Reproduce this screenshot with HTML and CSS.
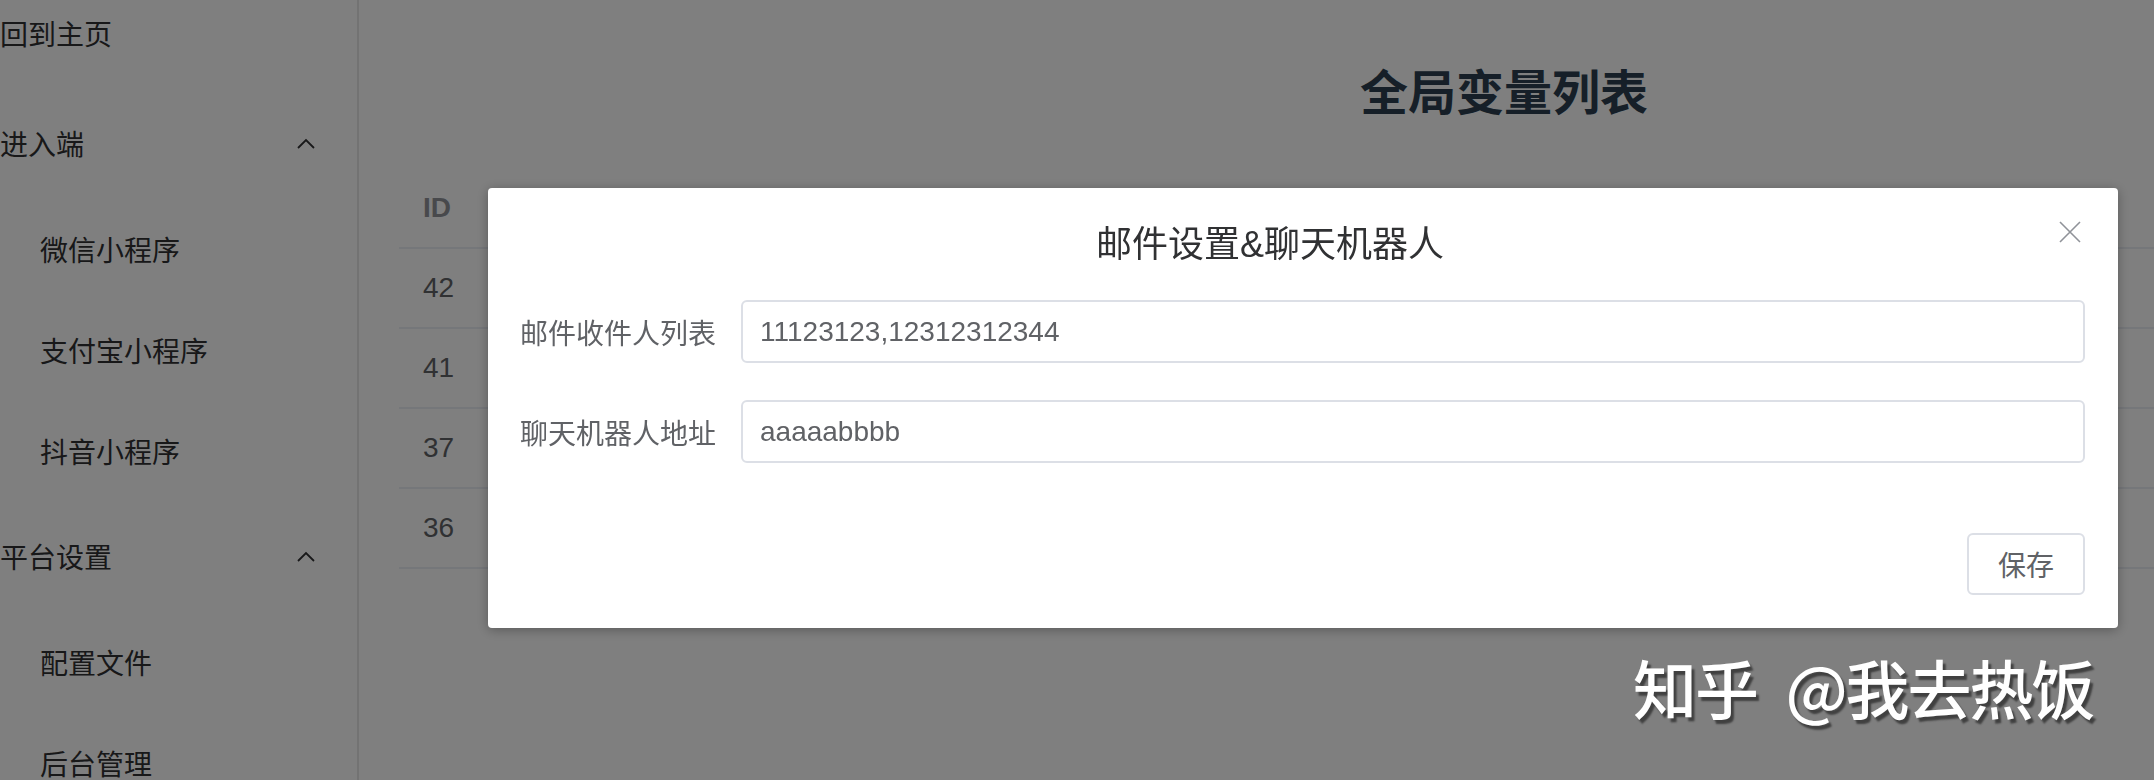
FILE: index.html
```html
<!DOCTYPE html>
<html lang="zh-CN">
  <head>
    <meta charset="UTF-8" />
    <meta name="viewport" content="width=device-width, initial-scale=1.0" />
    <title>全局变量列表</title>
    <link rel="stylesheet" href="styles.css">
  </head>
  <body>
    <div class="layout">
      <!-- 左侧菜单 -->
      <aside class="aside">
        <ul class="menu">
          <li class="menu-item">回到主页</li>
          <li class="menu-item submenu-title">
            <span>进入端</span>
            <svg class="arrow" width="18" height="11" viewBox="0 0 18 11"><polyline points="1,10 9,2 17,10" fill="none" stroke="#303133" stroke-width="1.8"/></svg>
          </li>
          <li class="menu-item sub">微信小程序</li>
          <li class="menu-item sub">支付宝小程序</li>
          <li class="menu-item sub">抖音小程序</li>
          <li class="menu-item submenu-title">
            <span>平台设置</span>
            <svg class="arrow" width="18" height="11" viewBox="0 0 18 11"><polyline points="1,10 9,2 17,10" fill="none" stroke="#303133" stroke-width="1.8"/></svg>
          </li>
          <li class="menu-item sub">配置文件</li>
          <li class="menu-item sub">后台管理</li>
        </ul>
      </aside>
      <!-- 主体 -->
      <main class="main">
        <h1 class="page-title">全局变量列表</h1>
        <table class="table">
          <thead>
            <tr><th>ID</th></tr>
          </thead>
          <tbody>
            <tr><td>42</td></tr>
            <tr><td>41</td></tr>
            <tr><td>37</td></tr>
            <tr><td>36</td></tr>
          </tbody>
        </table>
      </main>
    </div>

    <!-- 遮罩和弹窗 -->
    <div class="mask">
      <div class="dialog">
        <div class="dialog-header">邮件设置&amp;聊天机器人</div>
        <button class="dialog-close" aria-label="关闭">
          <svg width="22" height="22" viewBox="0 0 22 22"><path d="M1 1L21 21M21 1L1 21" stroke="#909399" stroke-width="1.6" fill="none"/></svg>
        </button>
        <form class="form">
          <div class="form-item">
            <label class="form-label">邮件收件人列表</label>
            <input class="input" type="text" value="11123123,12312312344">
          </div>
          <div class="form-item">
            <label class="form-label">聊天机器人地址</label>
            <input class="input" type="text" value="aaaaabbbb">
          </div>
        </form>
        <div class="dialog-footer">
          <button class="btn">保存</button>
        </div>
      </div>
    </div>

    <div class="watermark">知乎 @我去热饭</div>
  </body>
</html>
```

FILE: styles.css
```css
/* 样式初始化 */
* {
  margin: 0;
  padding: 0;
  box-sizing: border-box;
}
li {
  list-style: none;
}
body {
  width: 2154px;
  height: 780px;
  overflow: hidden;
  background: #fff;
  font-family: "Liberation Sans", "Noto Sans CJK SC", sans-serif;
  color: #303133;
}
.layout {
  display: flex;
  height: 100%;
}
/* 左侧菜单 */
.aside {
  width: 359px;
  flex-shrink: 0;
  border-right: 2px solid #e6e6e6;
  overflow: hidden;
}
.menu {
  margin-top: -22px;
}
.menu-item {
  height: 110px;
  display: flex;
  align-items: center;
  justify-content: space-between;
  font-size: 28px;
  color: #303133;
  padding-right: 42px;
}
.menu-item.sub {
  height: 101px;
  padding-left: 40px;
}
.arrow {
  display: block;
}
/* 主体 */
.main {
  flex: 1;
  overflow: hidden;
}
.page-title {
  font-size: 48px;
  line-height: 64px;
  font-weight: bold;
  color: #2c3e50;
  padding: 62px 0 0 1001px;
}
.table {
  margin: 42px 0 0 40px;
  width: calc(100% - 40px);
  border-collapse: collapse;
  font-size: 28px;
}
.table th,
.table td {
  height: 80px;
  text-align: left;
  padding-left: 24px;
  border-bottom: 2px solid #ebeef5;
}
.table th {
  color: #909399;
  font-weight: bold;
}
.table td {
  color: #606266;
}
/* 遮罩 */
.mask {
  position: fixed;
  top: 0;
  left: 0;
  right: 0;
  bottom: 0;
  background: rgba(0, 0, 0, 0.5);
}
/* 弹窗 */
.dialog {
  position: relative;
  width: 1630px;
  margin: 188px 0 0 488px;
  background: #fff;
  border-radius: 4px;
  box-shadow: 0 2px 12px rgba(0, 0, 0, 0.3);
  padding: 33px 33px 33px 32px;
}
.dialog-header {
  font-size: 36px;
  line-height: 48px;
  color: #303133;
  text-align: center;
  padding-right: 65px;
}
.dialog-close {
  position: absolute;
  top: 33px;
  right: 37px;
  border: none;
  background: none;
  width: 22px;
  height: 22px;
}
.dialog-close svg {
  display: block;
}
.form {
  margin-top: 31px;
  display: flex;
  flex-direction: column;
  gap: 37px;
}
.form-item {
  display: flex;
  align-items: center;
}
.form-label {
  width: 221px;
  padding-right: 25px;
  text-align: right;
  font-size: 28px;
  color: #606266;
}
.input {
  flex: 1;
  height: 63px;
  border: 2px solid #dcdfe6;
  border-radius: 6px;
  padding: 0 17px;
  font-family: "Liberation Sans", "Noto Sans CJK SC", sans-serif;
  font-size: 28px;
  color: #606266;
  outline: none;
}
.dialog-footer {
  margin-top: 70px;
  display: flex;
  justify-content: flex-end;
}
.btn {
  width: 118px;
  height: 62px;
  border: 2px solid #dcdfe6;
  border-radius: 6px;
  background: #fff;
  font-family: "Liberation Sans", "Noto Sans CJK SC", sans-serif;
  font-size: 28px;
  color: #606266;
}
/* 水印 */
.watermark {
  position: fixed;
  left: 1633px;
  top: 654px;
  font-family: "Noto Sans CJK SC", sans-serif;
  font-size: 64px;
  line-height: 1;
  font-weight: 500;
  letter-spacing: -2px;
  word-spacing: 16px;
  color: #fff;
  text-shadow: 3px 4px 2px #404040;
  white-space: nowrap;
}
```
